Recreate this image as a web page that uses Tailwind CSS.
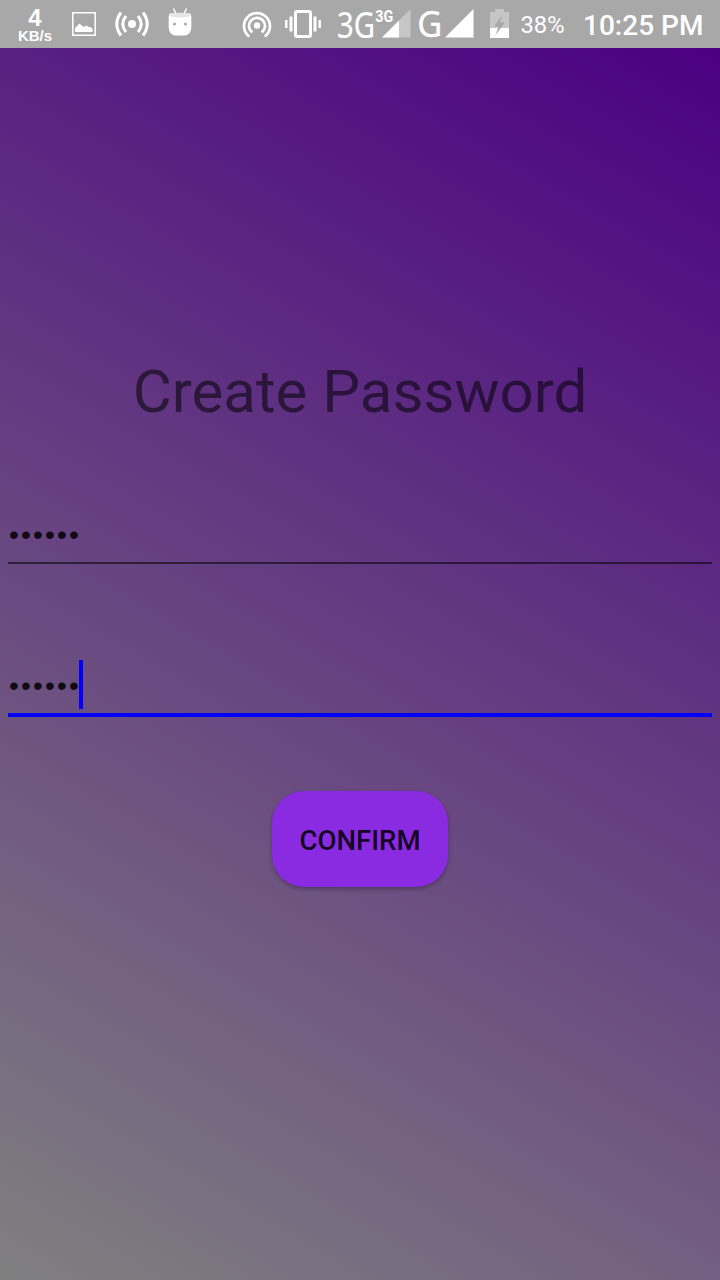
<!DOCTYPE html>
<html lang="en">
<head>
<meta charset="utf-8">
<title>Create Password</title>
<script src="https://cdn.jsdelivr.net/npm/@tailwindcss/browser@4"></script>
</head>
<body class="w-[720px] h-[1280px] overflow-hidden flex flex-col bg-[#a8a8a8] font-['Roboto',sans-serif]">
<header class="h-12 shrink-0 flex items-start text-white whitespace-nowrap bg-[#a8a8a8]">
  <div class="ml-[15px] w-10 h-12 pt-[7px] flex flex-col items-center font-bold">
    <span class="text-[24px] leading-[21px] font-['Liberation_Sans',sans-serif]">4</span>
    <span class="text-[15px] leading-[15px] font-['Liberation_Sans',sans-serif]">KB/s</span>
  </div>
  <svg class="ml-[17px] w-6 h-12" viewBox="0 0 24 48" fill="#fff"><rect x=".8" y="12.800" width="22.400" height="22.400" fill="none" stroke="#fff" stroke-width="1.500"/><path d="M3 32v-4l4.500-4.500 4 3.500 3-1.500 2 1.500h2l2 2v3z"/></svg>
  <svg class="ml-[18px] w-9 h-12" viewBox="0 0 36 48" fill="none" stroke="#fff" stroke-width="3"><circle cx="18" cy="24" r="4" fill="#fff" stroke="none"/><path d="M12 16Q5.500 24 12 32M24 16Q30.500 24 24 32M7 12.500Q-1.500 24 7 35.500M29 12.500Q37.500 24 29 35.500"/></svg>
  <svg class="ml-[18px] w-6 h-12" viewBox="0 0 24 48"><path d="M5.500 8.500 8 14M18.500 8.500 16 14" stroke="#fff" stroke-width="1.500"/><path d="M.7 16Q1 13 5 13H19Q23 13 23.300 16V28Q22.500 35 17 35.500H7Q1.500 35 .7 28z" fill="#fff"/><path d="M1 15Q2 12.800 12 12.800T23 15Q21 17.500 12 17.500T1 15" fill="#e5e5e5"/><circle cx="6.500" cy="24" r="1.600" fill="#aaa"/><circle cx="17.500" cy="24" r="1.600" fill="#aaa"/></svg>
  <svg class="ml-[50px] w-[30px] h-12" viewBox="0 0 30 48" fill="none" stroke="#fff" stroke-width="2.700"><circle cx="15" cy="25.500" r="3.200" fill="#fff" stroke="none"/><path d="M7.300 36.500A13 13 0 1 1 22.700 36.500M10.300 32.300A8 8 0 1 1 19.700 32.300"/></svg>
  <svg class="ml-[13px] w-9 h-12" viewBox="0 0 36 48" fill="#fff"><rect x="10.500" y="11.500" width="15" height="25" rx="1.500" fill="none" stroke="#fff" stroke-width="3"/><path d="M0 20h2.500v8H0zM4.500 16.500h3v15h-3zM28.500 16.500h3v15h-3zM33.500 20H36v8h-2.500z"/></svg>
  <svg class="ml-[14px] w-[76px] h-12 overflow-visible" viewBox="335 0 76 48" fill="#fff"><text x="337" y="37.700" font-family="Noto Sans" font-size="36.500" stroke="#fff" stroke-width=".2" textLength="38" lengthAdjust="spacingAndGlyphs">3G</text><path d="M410.500 9V37.500H382z" fill="#c6c6c6"/><path d="M399 20.500V37.500H382z"/><text x="375.300" y="21.500" font-family="Roboto" font-weight="700" font-size="16.500" textLength="18" lengthAdjust="spacingAndGlyphs">3G</text></svg>
  <svg class="ml-[7px] w-[56px] h-12" viewBox="418 0 56 48" fill="#fff"><text x="417.300" y="36.500" font-family="Noto Sans" font-size="35.500" stroke="#fff" stroke-width=".3" textLength="25" lengthAdjust="spacingAndGlyphs">G</text><path d="M473.500 9V37.500H445z"/></svg>
  <svg class="ml-4 w-[19px] h-12" viewBox="0 0 19 48"><path d="M5 9h9v3h5V28H0V12h5z" fill="#c6c6c6"/><path d="M0 28H19V38H0z" fill="#fff"/><path d="M12 15.500 4 26.500H8.500L5.500 35 15 22.500H10z" fill="#a8a8a8"/></svg>
  <svg class="ml-[11px] w-[46px] h-12" viewBox="520 0 46 48" fill="#fff"><text x="520.500" y="33" font-family="Roboto" font-size="24" textLength="44" lengthAdjust="spacingAndGlyphs">38%</text></svg>
  <svg class="ml-[16px] w-[124px] h-12" viewBox="582 0 124 48" fill="#fff"><text x="583" y="35" font-family="Roboto" font-weight="500" font-size="28.500" textLength="120.500" lengthAdjust="spacingAndGlyphs">10:25 PM</text></svg>
</header>
<main class="flex-1 flex flex-col px-2 bg-[linear-gradient(210.300deg,#4b0082,#808080)]">
  <h1 class="mt-[309px] h-[70px] leading-[70px] text-center text-[60px] text-black/54 whitespace-nowrap">Create Password</h1>
  <div class="mt-[82px] h-[55px] border-b-2 border-black/54 flex items-start pt-[1px] text-[28px] tracking-[2.200px] text-black/87 font-['Liberation_Sans',sans-serif]">
    <span class="h-[49px] leading-[49px] pl-px">••••••</span>
  </div>
  <div class="mt-[94px] h-[59px] border-b-4 border-[#0000ff] flex items-start pt-[2px] text-[28px] tracking-[2.200px] text-black/87 font-['Liberation_Sans',sans-serif]">
    <span class="h-[49px] leading-[51px] w-[71px] pl-px">••••••</span><i class="w-1 h-[49px] bg-[#0000ff]"></i>
  </div>
  <button class="mt-[74px] mx-auto w-44 h-24 pt-[4px] rounded-[32px] bg-[#8a2be2] text-black/87 text-[27.600px] font-medium shadow-[0_2px_4px_rgba(0,0,0,0.300)]">CONFIRM</button>
</main>
</body>
</html>
